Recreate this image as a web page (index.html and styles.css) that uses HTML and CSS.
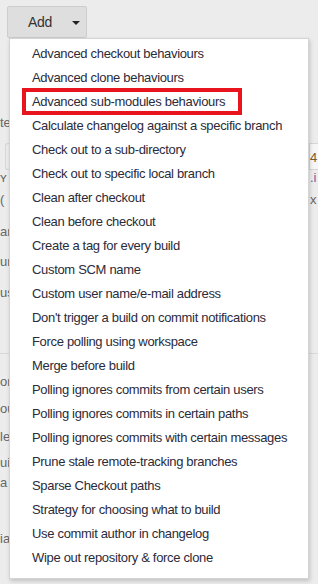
FILE: index.html
```html
<!DOCTYPE html>
<html lang="en">
<head>
    <meta charset="UTF-8">
    <meta name="viewport" content="width=device-width, initial-scale=1.0">
    <title>Add behaviour</title>
    <link rel="stylesheet" href="styles.css">
</head>
<body>
    <div class="toolbar">
        <button class="add-btn">Add <span class="caret"></span></button>
    </div>

    <div class="behind">
        <div class="row"><span>te</span></div>
        <div class="row field sp12"><span class="box-left"></span><span class="box-right">4</span></div>
        <div class="row"><span>ʏ</span><span class="purple">.i</span></div>
        <div class="row sp6"><span>(</span><span>x</span></div>
        <div class="row sp16"><span>ar</span></div>
        <div class="row sp14"><span>ur</span></div>
        <div class="row sp15"><span>us</span></div>
        <div class="rule"></div>
        <div class="row sp20"><span>or</span></div>
        <div class="row sp11"><span>ou</span></div>
        <div class="row sp12"><span>le</span></div>
        <div class="row sp10"><span>ui</span></div>
        <div class="row sp4"><span>a</span></div>
        <div class="row sp40"><span>ia</span></div>
    </div>

    <ul class="menu">
        <li>Advanced checkout behaviours</li>
        <li>Advanced clone behaviours</li>
        <li><span class="marked">Advanced sub-modules behaviours</span></li>
        <li>Calculate changelog against a specific branch</li>
        <li>Check out to a sub-directory</li>
        <li>Check out to specific local branch</li>
        <li>Clean after checkout</li>
        <li>Clean before checkout</li>
        <li>Create a tag for every build</li>
        <li>Custom SCM name</li>
        <li>Custom user name/e-mail address</li>
        <li>Don't trigger a build on commit notifications</li>
        <li>Force polling using workspace</li>
        <li>Merge before build</li>
        <li>Polling ignores commits from certain users</li>
        <li>Polling ignores commits in certain paths</li>
        <li>Polling ignores commits with certain messages</li>
        <li>Prune stale remote-tracking branches</li>
        <li>Sparse Checkout paths</li>
        <li>Strategy for choosing what to build</li>
        <li>Use commit author in changelog</li>
        <li>Wipe out repository &amp; force clone</li>
    </ul>
</body>
</html>
```

FILE: styles.css
```css
body { margin: 0; background: #ececec; font-family: "Liberation Sans", Arial, sans-serif; font-size: 13px; color: #333; height: 584px; overflow: hidden; position: relative; }

.toolbar { padding: 6px 0 0 7px; height: 32px; }
.add-btn { width: 80px; height: 32px; background: #dedede; border: 1px solid #cdcdcd; border-radius: 2px; font-family: inherit; font-size: 14px; letter-spacing: -0.3px; color: #333; padding: 0 0 0 20px; text-align: left; }
.caret { display: inline-block; width: 0; height: 0; border-left: 4px solid transparent; border-right: 4px solid transparent; border-top: 4px solid #222; margin-left: 16px; vertical-align: middle; }

.behind { padding-top: 77px; color: #666; }
.row { display: flex; justify-content: space-between; height: 16px; line-height: 16px; }
.row span:last-child:not(:first-child) { width: 8px; }
.field { height: 27px; }
.box-left { width: 8px; margin-left: 5px; border: 1px solid #d6d6d6; border-right: none; border-radius: 3px 0 0 3px; }
.box-right { width: 8px; background: #f6f6f6; border: 1px solid #d6d6d6; border-right: none; line-height: 27px; color: #7a5a2a; }
.purple { color: #7a5aa0; }
.rule { height: 1px; background: #d8d8d8; margin-top: 52px; }
.sp4 { margin-top: 4px; }
.sp6 { margin-top: 6px; }
.sp10 { margin-top: 10px; }
.sp11 { margin-top: 11px; }
.sp12 { margin-top: 12px; }
.sp14 { margin-top: 14px; }
.sp15 { margin-top: 15px; }
.sp16 { margin-top: 16px; }
.sp20 { margin-top: 20px; }
.sp40 { margin-top: 40px; }

.menu { position: absolute; left: 9px; top: 38px; width: 298px; margin: 0; padding: 3px 0 8px; list-style: none; background: #fff; border: 1px solid #d4d4d4; box-shadow: 1px 2px 4px rgba(0, 0, 0, 0.18); }
.menu li { height: 24px; line-height: 24px; padding-left: 22px; white-space: nowrap; color: #2b2b3a; letter-spacing: -0.32px; }
.marked { position: relative; }
.marked::after { content: ""; position: absolute; left: -10px; right: -17px; top: -6px; bottom: -6px; border: 4px solid #e8141e; }
```
